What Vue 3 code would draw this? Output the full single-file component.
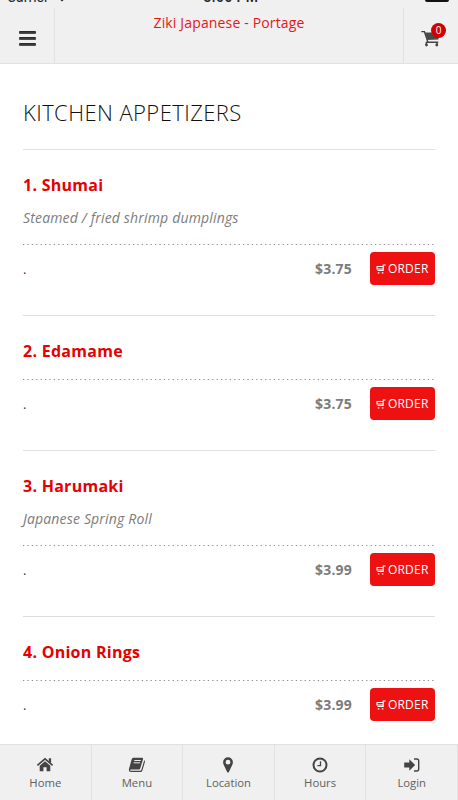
<script setup>
const items = [
  { name: '1. Shumai', desc: 'Steamed / fried shrimp dumplings', price: '$3.75' },
  { name: '2. Edamame', desc: '', price: '$3.75' },
  { name: '3. Harumaki', desc: 'Japanese Spring Roll', price: '$3.99' },
  { name: '4. Onion Rings', desc: '', price: '$3.99' },
]
const tabs = ['Home', 'Menu', 'Location', 'Hours', 'Login']
</script>

<template>
  <div class="screen">
    <header class="header">
      <div class="status">
        <span class="carrier">Carrier
          <svg class="wifi" width="12" height="9" viewBox="0 0 12 9"><path d="M0 3Q6-2 12 3L6 8.4Z" fill="#222" /></svg>
        </span>
        <span class="time">3:06 PM</span>
        <span class="battery"></span>
      </div>
      <div class="bar">
        <button class="menu" aria-label="Menu"><i></i><i></i><i></i></button>
        <h1 class="title">Ziki Japanese - Portage</h1>
        <button class="cart" aria-label="Cart">
          <svg width="18" height="17" viewBox="0 0 18 17">
            <path d="M.3 1.6H3.4L7 12.4" fill="none" stroke="#3c3c3c" stroke-width="1.4" />
            <path d="M3.8 2.5H17.5V9.4L6.2 10Z" fill="#4a4a4a" />
            <path d="M5 12.3h12.2M5.3 12v3M16 12v3" fill="none" stroke="#444" stroke-width="1.4" />
            <circle cx="5.5" cy="15" r="1.4" fill="#444" /><circle cx="15.8" cy="15" r="1.4" fill="#444" />
          </svg>
          <span class="badge">0</span>
        </button>
      </div>
    </header>

    <main class="content">
      <h2 class="heading">KITCHEN APPETIZERS</h2>
      <section v-for="item in items" :key="item.name" class="item">
        <h3 class="name">{{ item.name }}</h3>
        <p v-if="item.desc" class="desc">{{ item.desc }}</p>
        <svg class="dots" width="412" height="1"><path d="M0 .5H412" stroke="#909090" stroke-dasharray="1.3 3.1" /></svg>
        <div class="row">
          <span class="dot">.</span>
          <span class="price">{{ item.price }}</span>
          <button class="order">
            <svg width="10" height="10" viewBox="0 0 10 10">
              <path d="M.5 2.5H7.2V6.5H1.6M1 2.5V5H7M7.2 6.5V1H9.6M1.8 8.8H3.4M5.8 8.8H7.4" fill="none" stroke="#fff" stroke-width="1.15" />
            </svg>
            <span>ORDER</span>
          </button>
        </div>
      </section>
    </main>

    <nav class="tabs">
      <a v-for="tab in tabs" :key="tab" class="tab">
        <svg width="18" height="16" viewBox="0 0 18 16">
          <template v-if="tab === 'Home'">
            <path d="M1.4 8.3L9 1.8L16.6 8.3" fill="none" stroke="#444" stroke-width="1.6" />
            <path d="M12.8 1.2h2.3v5l-2.3-2Z" fill="#444" />
            <path d="M3.7 8.8L9 4.3L14.3 8.8V14.3H10.6V10.3H7.4V14.3H3.7Z" fill="#444" />
          </template>
          <template v-else-if="tab === 'Menu'">
            <path d="M5.1.8H14.2Q15.4.9 15 2.2L12.3 11.3Q12 12.5 10.8 12.5H3Q1.8 12.5 2.1 13.2Q2.3 13.8 3.2 13.8H12Q13.1 13.8 13.4 12.8L16.2 3.3Q17.2 3.8 16.9 5L14.4 13.4Q13.9 15 12.3 15H3Q.4 14.8.9 12.2L3.7 2.2Q4 .9 5.1.8Z" fill="#444" />
            <path d="M6.3 3.5H12.8M5.6 5.8H12.1" stroke="#eee" stroke-width="1" />
          </template>
          <path v-else-if="tab === 'Location'" fill="#444" fill-rule="evenodd" d="M9 .3A4.9 4.9 0 0 0 4.1 5.2Q4.1 6.6 4.8 8L8.1 15Q9 16.2 9.9 15L13.2 8Q13.9 6.6 13.9 5.2A4.9 4.9 0 0 0 9 .3ZM9 2.8A2.4 2.4 0 1 1 9 7.6A2.4 2.4 0 0 1 9 2.8Z" />
          <template v-else-if="tab === 'Hours'">
            <circle cx="9" cy="8" r="6.5" fill="none" stroke="#444" stroke-width="2" />
            <path d="M9.5 4.2V8.6H6.4" fill="none" stroke="#444" stroke-width="1.3" />
          </template>
          <template v-else>
            <path d="M1.2 5.6H6.3V2.2L12.1 8L6.3 13.8V10.4H1.2Z" fill="#444" />
            <path d="M11 2H13.8Q15.7 2 15.7 3.9V12.1Q15.7 14 13.8 14H11" fill="none" stroke="#444" stroke-width="1.4" />
          </template>
        </svg>
        <span>{{ tab }}</span>
      </a>
    </nav>
  </div>
</template>

<style>
body { margin: 0; background: #fff; }
</style>

<style scoped>
* { box-sizing: border-box; }
.screen { width: 458px; height: 800px; display: flex; flex-direction: column; overflow: hidden; background: #fff; font-family: "Open Sans", sans-serif; color: #333; }
button { font: inherit; border: 0; padding: 0; margin: 0; background: none; }
.header { height: 64px; flex: none; background: #f0f0f0; border-bottom: 1px solid #e2e2e2; display: flex; flex-direction: column; }
.status { height: 8px; flex: none; overflow: hidden; display: grid; grid-template-columns: 1fr auto 1fr; font: 14px/16px Roboto, sans-serif; color: #222; }
.status > span { margin-top: -11px; }
.carrier { padding-left: 7px; }
.wifi { margin-left: 4px; }
.time { font-weight: 500; letter-spacing: .4px; padding-left: 4px; }
.status .battery { justify-self: end; margin: 0 9px 0 0; width: 24px; height: 2px; background: #111; border-radius: 0 0 2px 2px; }
.bar { flex: 1; display: grid; grid-template-columns: 55px 1fr 55px; }
.menu { border-right: 1px solid #e2e2e2; display: flex; flex-direction: column; align-items: center; justify-content: center; gap: 3px; padding-top: 5px; }
.menu i { width: 17px; height: 3px; background: linear-gradient(#222, #555); border-radius: 1px; }
.title { margin: 0; padding-top: 5px; text-align: center; font-size: 14px; line-height: 20px; font-weight: 400; letter-spacing: .15px; color: #e91616; }
.cart { position: relative; border-left: 1px solid #e2e2e2; display: flex; align-items: center; justify-content: center; padding: 6px 2px 0 0; }
.badge { position: absolute; right: 12px; top: 15px; width: 15px; height: 15px; border-radius: 50%; background: #d00000; color: #fff; font-size: 10px; line-height: 15px; text-align: center; }
.content { flex: 1; min-height: 0; overflow: hidden; padding: 0 23px; }
.heading { margin: 0; height: 85px; padding-top: 32px; font-size: 22px; line-height: 32px; font-weight: 300; letter-spacing: .42px; color: #111; white-space: nowrap; }
.item { border-top: 1px solid #dedede; padding: 23px 0 30px; }
.name { margin: 0; font-size: 16px; line-height: 24px; font-weight: 700; letter-spacing: .27px; color: #e60000; }
.desc { margin: 11px 0 0; font-size: 14px; line-height: 20px; font-style: italic; letter-spacing: .17px; color: #7c7c7c; }
.dots { display: block; margin-top: 16px; }
.row { display: flex; align-items: center; margin-top: 7px; height: 33px; }
.dot { flex: 1; font-size: 13px; }
.price { font-size: 14px; font-weight: 700; letter-spacing: .2px; color: #7c7c7c; margin-right: 17.5px; }
.order { width: 65.5px; height: 33px; border-radius: 4px; background: #ee1111; color: #fff; display: flex; align-items: center; justify-content: center; gap: 2px; font-size: 12px; letter-spacing: .2px; }
.tabs { flex: none; height: 56px; background: #f0f0f0; border-top: 1px solid #e0e0e0; display: grid; grid-template-columns: repeat(5, 1fr); }
.tab { border-right: 1px solid #e2e2e2; display: flex; flex-direction: column; align-items: center; padding-top: 12px; font-size: 11.3px; line-height: 16px; color: #606060; gap: 2px; }
</style>
